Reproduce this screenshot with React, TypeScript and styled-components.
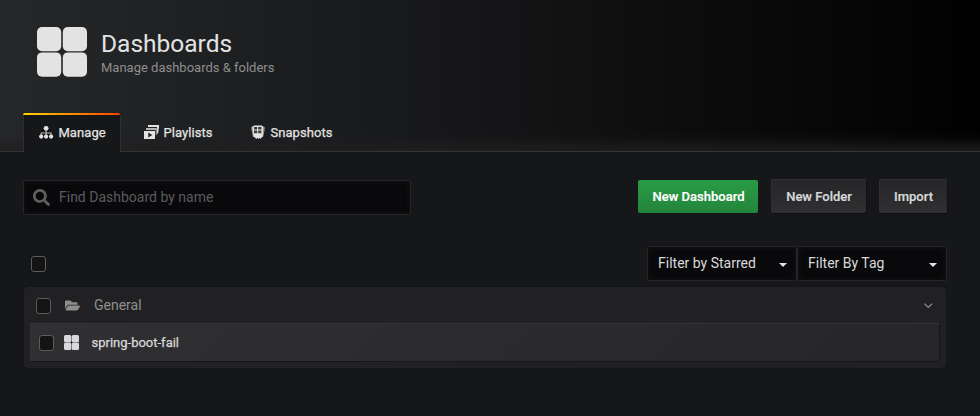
import React from 'react';
import styled, { createGlobalStyle } from 'styled-components';
import { FaSearch, FaFolderOpen } from 'react-icons/fa';

const GlobalStyle = createGlobalStyle`
  *, *::before, *::after { box-sizing: border-box; }
  html, body { margin: 0; background: #161719; }
  body { font-family: Roboto, "Liberation Sans", sans-serif; font-size: 13px; color: #d8d9da; overflow: hidden; }
`;

const Page = styled.div`
  width: 980px;
  height: 416px;
  background: #161719;
`;

const Header = styled.header`
  display: flex;
  flex-direction: column;
  justify-content: space-between;
  height: 152px;
  padding: 27px 23px 0;
  background:
    linear-gradient(to top, rgba(31, 31, 32, 0.85), rgba(31, 31, 32, 0.55) 6px, rgba(31, 31, 32, 0.15) 13px, rgba(31, 31, 32, 0) 20px),
    linear-gradient(90deg, #262729, #18191b 41%, #0f0f10 64%, #010101);
  border-bottom: 1px solid #343436;
`;

const Brand = styled.div`
  display: flex;
  padding-left: 14px;
`;

const Titles = styled.div`
  padding: 1px 0 0 14px;
`;

const Title = styled.h1`
  margin: 0;
  font-size: 24.5px;
  font-weight: 400;
  line-height: 31px;
  padding-bottom: 1px;
  color: #e3e3e3;
`;

const Subtitle = styled.div`
  font-size: 13px;
  line-height: 16px;
  color: #8e8e8e;
`;

const Tabs = styled.nav`
  display: flex;
  gap: 7px;
  height: 39px;
  margin-bottom: -1px;
`;

const Tab = styled.a<{ $active?: boolean; $width: number }>`
  position: relative;
  display: flex;
  align-items: center;
  width: ${p => p.$width}px;
  padding-left: 15px;
  border: 1px solid ${p => (p.$active ? '#2f2f32' : 'transparent')};
  border-width: 0 1px;
  border-radius: 3px 3px 0 0;
  background: ${p => (p.$active ? '#161719' : 'transparent')};
  line-height: 16px;
  letter-spacing: 0.08px;
  -webkit-text-stroke: 0.25px currentColor;
  color: #e3e3e3;

  &::before {
    content: '';
    display: ${p => (p.$active ? 'block' : 'none')};
    position: absolute;
    inset: 0 0 auto -1px;
    height: 2px;
    border-radius: 2px 2px 0 0;
    background: linear-gradient(90deg, #ffd500, #ff4400 99%);
  }
`;

const TabIcon = styled.svg`
  flex: none;
  width: 15px;
  height: 15px;
  margin-right: 4.4px;
`;

const Main = styled.main`
  padding: 27px 33px 0 23px;
`;

const ActionBar = styled.div`
  display: flex;
  align-items: flex-start;
  height: 36px;
`;

const field = `
  border: 1px solid #262628;
  border-radius: 2px;
  background: #09090b;
  box-shadow: inset 0 0 4px 2px #0f0f11;
`;

const SearchBox = styled.label`
  ${field}
  display: flex;
  align-items: center;
  width: 388px;
  height: 35px;
  margin: 1px auto 0 0;
  padding-left: 9px;
  color: #5f5f60;
`;

const SearchInput = styled.input`
  flex: 1;
  min-width: 0;
  margin-left: 9px;
  padding: 0 0 1px;
  border: 0;
  outline: 0;
  background: transparent;
  font: 400 14px Roboto, sans-serif;
  color: #d8d9da;
  &::placeholder { color: #5b5b5d; opacity: 1; }
`;

const Button = styled.button<{ $primary?: boolean; $width: number }>`
  width: ${p => p.$width}px;
  height: ${p => (p.$primary ? 33 : 34)}px;
  margin: ${p => (p.$primary ? '1px 0 0' : '0 0 0 13px')};
  padding: ${p => (p.$primary ? '0 0 1px 1px' : '1px 0 0 1px')};
  border: 0;
  border-radius: 2px;
  background: ${p => (p.$primary ? 'linear-gradient(#299c46, #23843b)' : 'linear-gradient(#262628, #303032)')};
  box-shadow: ${p => (p.$primary ? 'none' : 'inset 1px 1px 0 #303033, 1px 1px 0 #101011')};
  font: 500 13px Roboto, sans-serif;
  -webkit-text-stroke: 0.2px currentColor;
  color: ${p => (p.$primary ? '#fff' : '#d8d9da')};
`;

const FilterBar = styled.div`
  display: flex;
  align-items: center;
  height: 35px;
  margin-top: 31px;
  padding-left: 8px;
`;

const Checkbox = styled.span`
  flex: none;
  width: 15px;
  height: 16px;
  border: 1px solid #5b5b5c;
  border-radius: 3px;
  background: #141414;
`;

const Filters = styled.div`
  display: flex;
  margin-left: auto;
`;

const Select = styled.div`
  ${field}
  display: flex;
  align-items: center;
  justify-content: space-between;
  width: 150px;
  height: 35px;
  padding: 0 9px 1px 10px;
  font-size: 14px;
  color: #d8d9da;
`;

const Caret = styled.i`
  margin-top: 4px;
  border: 4px solid transparent;
  border-top-color: #e3e3e3;
  border-bottom: 0;
`;

const Section = styled.section`
  width: 922px;
  height: 81px;
  margin: 6px 0 0 1px;
  padding: 0 6px;
  border-radius: 4px;
  background: #212124;
  box-shadow: 0 0 1px #0b0b0c;
`;

const SectionHeader = styled.div`
  display: flex;
  align-items: center;
  height: 36px;
  padding: 1px 7px 0 6px;
  font-size: 14px;
  color: #8e8e8e;
`;

const FolderIcon = styled(FaFolderOpen)`
  flex: none;
  margin-left: 14px;
`;

const SectionName = styled.span`
  margin: -2px auto 0 14px;
`;

const Item = styled.div`
  display: flex;
  align-items: center;
  width: 909px;
  height: 38px;
  padding-left: 8px;
  border: 1px solid #353538;
  border-width: 1px 0 0 1px;
  background: linear-gradient(135deg, #303032, #262628);
  box-shadow: 1px 1px 0 #161618;
`;

const ItemName = styled.span`
  margin-left: 12.5px;
  -webkit-text-stroke: 0.25px currentColor;
`;

const GridSvg = styled.svg<{ $left?: number }>`
  flex: none;
  margin-left: ${p => p.$left ?? 0}px;
`;

const DashboardGlyph = ({ size, color, left }: { size: number; color: string; left?: number }) => (
  <GridSvg $left={left} width={size} height={size} viewBox="0 0 50 50" fill={color}>
    <rect width="24.2" height="24.2" rx="5" />
    <rect x="25.8" width="24.2" height="24.2" rx="5" />
    <rect y="25.4" width="24.2" height="24.4" rx="5" />
    <rect x="25.8" y="25.4" width="24.2" height="24.4" rx="5" />
  </GridSvg>
);

const ManageGlyph = () => (
  <TabIcon viewBox="0 0 15 15" fill="#e3e3e3">
    <circle cx="7.1" cy="3.3" r="2.4" />
    <path d="M7.1 5v6M2.2 11V8h9.9v3" fill="none" stroke="#b4b4b4" strokeWidth="1.2" />
    <circle cx="2.2" cy="11.6" r="2.1" />
    <circle cx="7.1" cy="11.6" r="2.1" />
    <circle cx="12.1" cy="11.6" r="2.1" />
  </TabIcon>
);

const PlaylistGlyph = () => (
  <TabIcon viewBox="0 0 15 15">
    <path d="M4 0h11v2L14 8.5h-1V2H4z" fill="#e3e3e3" />
    <path d="M2 3h10.7v7h-1V5H2z" fill="#b5b5b5" />
    <path fillRule="evenodd" d="M0 6h11v8H0zM4.3 7.6v4.8l4-2.4z" fill="#e3e3e3" />
  </TabIcon>
);

const SnapshotGlyph = () => (
  <TabIcon viewBox="0 0 15 15">
    <path d="M0 2.2 2 1.4l1.6 11.2-1.8-.8zM11.5.7l2.5 1.7-1.7 9.3-2 .8z" fill="#8f8f8f" />
    <path d="M1.3 2 3 .5h7.8l1.4 1.4-.5 9.6-1.2.9-.6 1.4-1.4-.7-1 .9-1-.9-1.5.9-.9-1.6-1.5-.8z" fill="#e3e3e3" />
    <path d="M3 2h3.2v2.6H3zM7.2 2h3.2v2.6H7.2zM3 5.6h3.2v2.6H3zM7.2 5.6h3.2v2.6H7.2z" fill="#3b3b3d" />
  </TabIcon>
);

const ChevronDown = () => (
  <svg width="10" height="7" viewBox="0 0 10 7" fill="none" stroke="#929294" strokeWidth="1.2">
    <path d="m1.4 1.6 3.9 3.9 3.9-3.9" />
  </svg>
);

export default function App() {
  return (
    <Page>
      <GlobalStyle />
      <Header>
        <Brand>
          <DashboardGlyph size={50} color="#e3e3e3" />
          <Titles>
            <Title>Dashboards</Title>
            <Subtitle>Manage dashboards &amp; folders</Subtitle>
          </Titles>
        </Brand>
        <Tabs>
          <Tab $active $width={98}><ManageGlyph />Manage</Tab>
          <Tab $width={100}><PlaylistGlyph />Playlists</Tab>
          <Tab $width={120}><SnapshotGlyph />Snapshots</Tab>
        </Tabs>
      </Header>
      <Main>
        <ActionBar>
          <SearchBox>
            <FaSearch size={17} />
            <SearchInput placeholder="Find Dashboard by name" />
          </SearchBox>
          <Button $primary $width={120}>New Dashboard</Button>
          <Button $width={95}>New Folder</Button>
          <Button $width={68}>Import</Button>
        </ActionBar>
        <FilterBar>
          <Checkbox />
          <Filters>
            <Select>Filter by Starred<Caret /></Select>
            <Select>Filter By Tag<Caret /></Select>
          </Filters>
        </FilterBar>
        <Section>
          <SectionHeader>
            <Checkbox />
            <FolderIcon size={15} />
            <SectionName>General</SectionName>
            <ChevronDown />
          </SectionHeader>
          <Item>
            <Checkbox />
            <DashboardGlyph size={15} color="#d8d9da" left={10} />
            <ItemName>spring-boot-fail</ItemName>
          </Item>
        </Section>
      </Main>
    </Page>
  );
}
